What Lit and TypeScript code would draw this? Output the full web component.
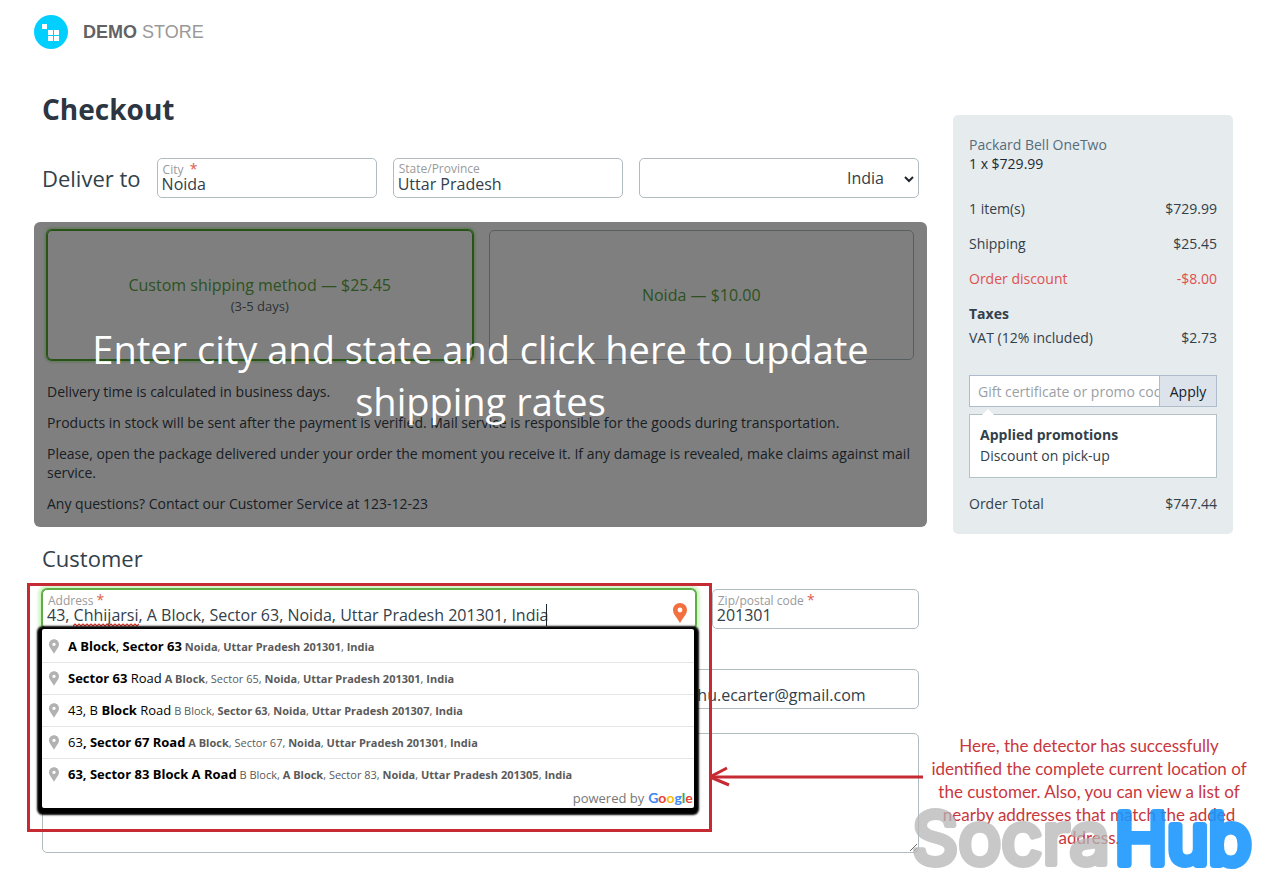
import { LitElement, html, css, svg } from "lit";
import { customElement, state } from "lit/decorators.js";

type Part = [string, boolean];

interface Suggestion {
  query: Part[];
  rest: Part[];
}

const suggestions: Suggestion[] = [
  {
    query: [["A Block", true], [", ", false], ["Sector 63", true]],
    rest: [["Noida", true], [", ", false], ["Uttar Pradesh 201301", true], [", ", false], ["India", true]],
  },
  {
    query: [["Sector 63", true], [" Road", false]],
    rest: [["A Block", true], [", Sector 65, ", false], ["Noida", true], [", ", false], ["Uttar Pradesh 201301", true], [", ", false], ["India", true]],
  },
  {
    query: [["43, B ", false], ["Block", true], [" Road", false]],
    rest: [["B Block, ", false], ["Sector 63", true], [", ", false], ["Noida", true], [", ", false], ["Uttar Pradesh 201307", true], [", ", false], ["India", true]],
  },
  {
    query: [["63", false], [", Sector 67 Road", true]],
    rest: [["A Block", true], [", Sector 67, ", false], ["Noida", true], [", ", false], ["Uttar Pradesh 201301", true], [", ", false], ["India", true]],
  },
  {
    query: [["63, Sector 83 Block A Road", true]],
    rest: [["B Block, ", false], ["A Block", true], [", Sector 83, ", false], ["Noida", true], [", ", false], ["Uttar Pradesh 201305", true], [", ", false], ["India", true]],
  },
];

const parts = (list: Part[]) => list.map(([text, match]) => (match ? html`<b>${text}</b>` : text));

const pin = (cls: string) => html`<svg class=${cls} viewBox="0 0 14 20" aria-hidden="true">
  ${svg`<path fill="currentColor" fill-rule="evenodd" d="M7 0C3.1 0 0 3.1 0 7c0 3.400 2 5.500 3.600 7.800C5 16.700 6 18.300 7 20c1-1.700 2-3.300 3.400-5.200C12 12.500 14 10.400 14 7c0-3.900-3.100-7-7-7zm0 4.600a2.400 2.400 0 1 1 0 4.800 2.400 2.400 0 0 1 0-4.800z"/>`}
</svg>`;

@customElement("app-root")
export class AppRoot extends LitElement {
  @state() private shipping = "custom";

  static styles = css`
    :host {
      display: block;
      position: relative;
      overflow: hidden;
      background: #fff;
      color: #32404a;
      font: 14px/19px "Open Sans", sans-serif;
    }
    * { box-sizing: border-box; }
    input, select, textarea, button { font: inherit; color: inherit; margin: 0; }
    h1, h2, p, ul { margin: 0; padding: 0; }

    .header { display: flex; padding: 15px 34px 0; }
    .brand {
      display: flex;
      align-items: center;
      gap: 15px;
      color: #999;
      text-decoration: none;
      font: 18px/34px "Liberation Sans", Arial, sans-serif;
    }
    .brand b { color: #626262; }
    .brand svg { width: 34px; height: 34px; }

    .page {
      display: grid;
      grid-template-columns: minmax(0, 1fr) 280px;
      gap: 26px;
      align-items: start;
      padding: 40px 40px 21px 34px;
    }
    .inset { padding: 0 8px; }
    .title { font-size: 28px; line-height: 40px; font-weight: 700; color: #2b3642; }
    .heading { font-size: 22px; line-height: 40px; font-weight: 400; }

    .deliver { display: grid; grid-template-columns: auto 22fr 23fr 28fr; gap: 16px; margin-top: 29px; }

    .field {
      position: relative;
      min-width: 0;
      height: 40px;
      padding: 4px 4px 0;
      border: 1px solid #b1bcc0;
      border-radius: 5px;
      background: #fff;
    }
    .field label { display: block; height: 11px; padding-left: 1px; font-size: 12px; line-height: 11px; color: #9a9a9a; white-space: pre; }
    .req { color: #e05b4d; font-size: 14px; line-height: 11px; }
    .field input {
      display: block;
      width: 100%;
      height: 20px;
      padding: 0;
      border: 0;
      outline: 0;
      background: none;
      font-size: 16px;
      line-height: 20px;
    }
    .field.country { padding: 0; }
    .field select {
      width: 100%;
      height: 38px;
      padding: 0 34px 0 8px;
      border: 0;
      outline: 0;
      background: none;
      appearance: none;
      font-size: 16px;
      text-align-last: right;
    }
    .chevron { position: absolute; right: 4px; top: 16px; width: 10px; height: 8px; pointer-events: none; }
    .field.focused {
      border-color: #5fae45;
      box-shadow: 0 0 0 1px #5fae45, 0 0 3px 4px #d3f5c6;
    }

    .rates {
      position: relative;
      margin-top: 24px;
      padding: 8px 13px 14px;
      border-radius: 6px;
      overflow: hidden;
    }
    .options { display: grid; grid-template-columns: 1fr 1fr; gap: 16px; }
    .option {
      display: flex;
      flex-direction: column;
      align-items: center;
      justify-content: center;
      height: 130px;
      border: 1px solid #b1bcc0;
      border-radius: 5px;
      font-size: 13px;
      line-height: 20px;
      color: #59636b;
    }
    .option.chosen { box-shadow: 0 0 0 1px #4ea72c, 0 0 2px 3px #d6f3c9; border-color: #4ea72c; }
    .option input { position: absolute; opacity: 0; pointer-events: none; }
    .option strong { font-size: 16px; line-height: 22px; font-weight: 400; color: #5aa53f; }
    .notes { display: grid; gap: 12px; padding-top: 22px; }
    .update {
      position: absolute;
      inset: 0;
      width: 100%;
      padding: 0 40px;
      border: 0;
      background: rgba(0, 0, 0, 0.5);
      color: #fff;
      font-size: 38px;
      line-height: 52px;
      cursor: pointer;
    }

    .customer { margin-top: 11px; }
    .row { display: grid; gap: 16px; }
    .row.address { grid-template-columns: repeat(4, minmax(0, 1fr)); margin-top: 11px; }
    .row.contact { grid-template-columns: repeat(3, minmax(0, 1fr)); margin-top: 40px; }
    .lookup { position: relative; grid-column: span 3; z-index: 2; }
    .comments {
      display: block;
      width: 100%;
      height: 120px;
      margin-top: 24px;
      padding: 5px;
      border: 1px solid #b1bcc0;
      border-radius: 5px;
      outline: 0;
      resize: vertical;
    }

    .locate {
      position: absolute;
      right: 8px;
      top: 13px;
      padding: 0;
      border: 0;
      background: none;
      color: #f2703f;
    }
    .locate svg { display: block; width: 14px; height: 20px; }
    .squiggle { position: absolute; left: 30px; top: 33px; width: 66px; height: 4px; }
    .caret { position: absolute; left: 503px; top: 14px; width: 1px; height: 22px; background: #1b2733; }

    .suggest {
      position: absolute;
      left: 0;
      right: 2px;
      top: 40px;
      padding-top: 1px;
      border-radius: 2px;
      background: #fff;
      box-shadow: 0 2px 2px 5px #000;
    }
    .suggest ul { list-style: none; }
    .suggest li {
      display: flex;
      align-items: center;
      gap: 9px;
      height: 32px;
      padding: 0 7px;
      border-top: 1px solid #e6e6e6;
      font-size: 11px;
      line-height: 30px;
      color: #5a5a5a;
      white-space: nowrap;
    }
    .suggest li:first-child { border-top-color: transparent; }
    .suggest .query { font-size: 13px; color: #000; }
    .grey { flex: none; width: 10px; height: 15px; color: #b2b2b2; }
    .powered {
      display: flex;
      justify-content: flex-end;
      gap: 4px;
      height: 18px;
      padding-right: 1px;
      font: 13px/16px "Open Sans", sans-serif;
      color: #777;
    }
    .google { font: 700 14px/16px "Lato", sans-serif; }
    .blue { color: #4285f4; }
    .red { color: #ea4335; }
    .yellow { color: #fbbc05; }
    .green { color: #34a853; }

    .frame {
      position: absolute;
      inset: -6px -16px -203px -15px;
      border: 3px solid #c62b33;
      pointer-events: none;
    }
    .arrow { position: absolute; left: 100%; top: 179px; width: 214px; height: 22px; }
    .callout {
      position: absolute;
      z-index: 3;
      right: 20px;
      top: 734px;
      width: 328px;
      font: 17px/23px "Lato", sans-serif;
      color: #c8373c;
      text-align: center;
    }
    .watermark {
      position: absolute;
      z-index: 4;
      right: 20px;
      top: 795px;
      width: 344px;
      height: 79px;
      pointer-events: none;
    }

    .summary { margin-top: 26px; padding: 20px 16px 21px; border-radius: 5px; background: #e6ebee; }
    .product a { color: #566d7c; text-decoration: none; }
    .product { color: #1d2a33; }
    .line { display: flex; justify-content: space-between; }
    .totals { display: grid; gap: 16px; margin-top: 26px; }
    .discount { color: #e0504f; }
    .tax { margin-top: 5px; }
    .coupon { display: flex; height: 32px; margin-top: 28px; border: 1px solid #aebccb; background: #fff; }
    .coupon input { flex: 1; min-width: 0; padding: 0 0 0 8px; border: 0; outline: 0; background: none; }
    .coupon input::placeholder { color: #999fa5; opacity: 1; }
    .coupon button { width: 57px; padding: 0; border: 0; border-left: 1px solid #aebccb; background: #dce3ea; color: #14202a; }
    .promos {
      position: relative;
      height: 64px;
      margin-top: 7px;
      padding: 9px 10px;
      border: 1px solid #b5c3c9;
      background: #fff;
      line-height: 21px;
    }
    .promos::before {
      content: "";
      position: absolute;
      left: 12px;
      top: -6px;
      border: solid transparent;
      border-width: 0 6px 6px;
      border-bottom-color: #fff;
    }
    .total { margin-top: 16px; }
  `;

  private option(id: string, name: string, note = "") {
    return html`<label class="option ${this.shipping === id ? "chosen" : ""}">
      <input type="radio" name="shipping" .checked=${this.shipping === id} @change=${() => (this.shipping = id)} />
      <strong>${name}</strong>${note ? html`<span>${note}</span>` : ""}
    </label>`;
  }

  render() {
    return html`
      <header class="header">
        <a class="brand" href="#">
          <svg viewBox="0 0 34 34" aria-hidden="true">
            <circle cx="17" cy="17" r="17" fill="#00cfff" />
            <path fill="#fff" d="M8 9h5v5H8zM14 15h5v5h-5zM20 15h5v5h-5zM14 21h5v5h-5zM20 21h5v5h-5z" />
          </svg>
          <span><b>DEMO</b> STORE</span>
        </a>
      </header>
      <div class="page">
        <main>
          <div class="inset">
            <h1 class="title">Checkout</h1>
            <div class="deliver">
              <h2 class="heading">Deliver to</h2>
              <div class="field">
                <label for="city">City  <span class="req">*</span></label>
                <input id="city" value="Noida" />
              </div>
              <div class="field">
                <label for="state">State/Province</label>
                <input id="state" value="Uttar Pradesh" />
              </div>
              <div class="field country">
                <select aria-label="Country"><option>India</option></select>
                <svg class="chevron" viewBox="0 0 10 8" aria-hidden="true">
                  <path d="M1 2l4 4 4-4" fill="none" stroke="#20262c" stroke-width="2" />
                </svg>
              </div>
            </div>
          </div>

          <section class="rates">
            <div class="options">
              ${this.option("custom", "Custom shipping method — $25.45", "(3-5 days)")}
              ${this.option("noida", "Noida — $10.00")}
            </div>
            <div class="notes">
              <p>Delivery time is calculated in business days.</p>
              <p>Products in stock will be sent after the payment is verified. Mail service is responsible for the goods during transportation.</p>
              <p>Please, open the package delivered under your order the moment you receive it. If any damage is revealed, make claims against mail service.</p>
              <p>Any questions? Contact our Customer Service at 123-12-23</p>
            </div>
            <button class="update" type="button">Enter city and state and click here to update shipping rates</button>
          </section>

          <section class="inset customer">
            <h2 class="heading">Customer</h2>
            <div class="row address">
              <div class="lookup">
                <div class="field focused">
                  <label for="address">Address <span class="req">*</span></label>
                  <input id="address" spellcheck="false" value="43, Chhijarsi, A Block, Sector 63, Noida, Uttar Pradesh 201301, India" />
                  <svg class="squiggle" viewBox="0 0 66 4" aria-hidden="true">
                    <path fill="none" stroke="#d93025" stroke-width="1.2"
                      d="M0 3l2-2 2 2 2-2 2 2 2-2 2 2 2-2 2 2 2-2 2 2 2-2 2 2 2-2 2 2 2-2 2 2 2-2 2 2 2-2 2 2 2-2 2 2 2-2 2 2 2-2 2 2 2-2 2 2 2-2 2 2 2-2 2 2 2-2" />
                  </svg>
                  <span class="caret"></span>
                  <button class="locate" type="button" aria-label="Detect location">${pin("")}</button>
                </div>
                <div class="suggest">
                  <ul>
                    ${suggestions.map(
                      (s) => html`<li>${pin("grey")}<span><span class="query">${parts(s.query)}</span> ${parts(s.rest)}</span></li>`
                    )}
                  </ul>
                  <div class="powered">
                    <span>powered by</span>
                    <span class="google"><span class="blue">G</span><span class="red">o</span><span class="yellow">o</span><span class="blue">g</span><span class="green">l</span><span class="red">e</span></span>
                  </div>
                </div>
                <div class="frame">
                  <svg class="arrow" viewBox="0 0 214 22" aria-hidden="true">
                    <path d="M2 12H214" stroke="#c62b33" stroke-width="3" />
                    <path d="M18 3L1 12l19 8" fill="none" stroke="#c62b33" stroke-width="3" />
                  </svg>
                </div>
              </div>
              <div class="field">
                <label for="zip">Zip/postal code <span class="req">*</span></label>
                <input id="zip" value="201301" />
              </div>
            </div>
            <div class="row contact">
              <div class="field"><label for="name">Name</label><input id="name" /></div>
              <div class="field"><label for="phone">Phone</label><input id="phone" /></div>
              <div class="field"><label for="email">E-mail</label><input id="email" value="himanshu.ecarter@gmail.com" /></div>
            </div>
            <textarea class="comments" aria-label="Comments"></textarea>
          </section>
        </main>

        <aside class="summary">
          <div class="product"><a href="#">Packard Bell OneTwo</a><br />1 x $729.99</div>
          <div class="totals">
            <div class="line"><span>1 item(s)</span><span>$729.99</span></div>
            <div class="line"><span>Shipping</span><span>$25.45</span></div>
            <div class="line discount"><span>Order discount</span><span>-$8.00</span></div>
            <b>Taxes</b>
          </div>
          <div class="line tax"><span>VAT (12% included)</span><span>$2.73</span></div>
          <div class="coupon">
            <input aria-label="Gift certificate or promo code" placeholder="Gift certificate or promo code" />
            <button type="button">Apply</button>
          </div>
          <div class="promos"><b>Applied promotions</b><br />Discount on pick-up</div>
          <div class="line total"><span>Order Total</span><span>$747.44</span></div>
        </aside>
      </div>

      <p class="callout">
        Here, the detector has successfully identified the complete current location of the customer. Also, you can view
        a list of nearby addresses that match the added address.
      </p>
      <svg class="watermark" viewBox="0 0 344 79" aria-hidden="true">
        <g font-family="Inter, sans-serif" stroke-linejoin="round">
          <text x="3" y="69" font-size="72" fill="#b6b6b6" stroke="#b6b6b6" stroke-width="6" opacity="0.75">Socra</text>
          <text x="206" y="69" font-size="70" fill="#1796ff" stroke="#1796ff" stroke-width="8" opacity="0.88">Hub</text>
        </g>
      </svg>
    `;
  }
}
